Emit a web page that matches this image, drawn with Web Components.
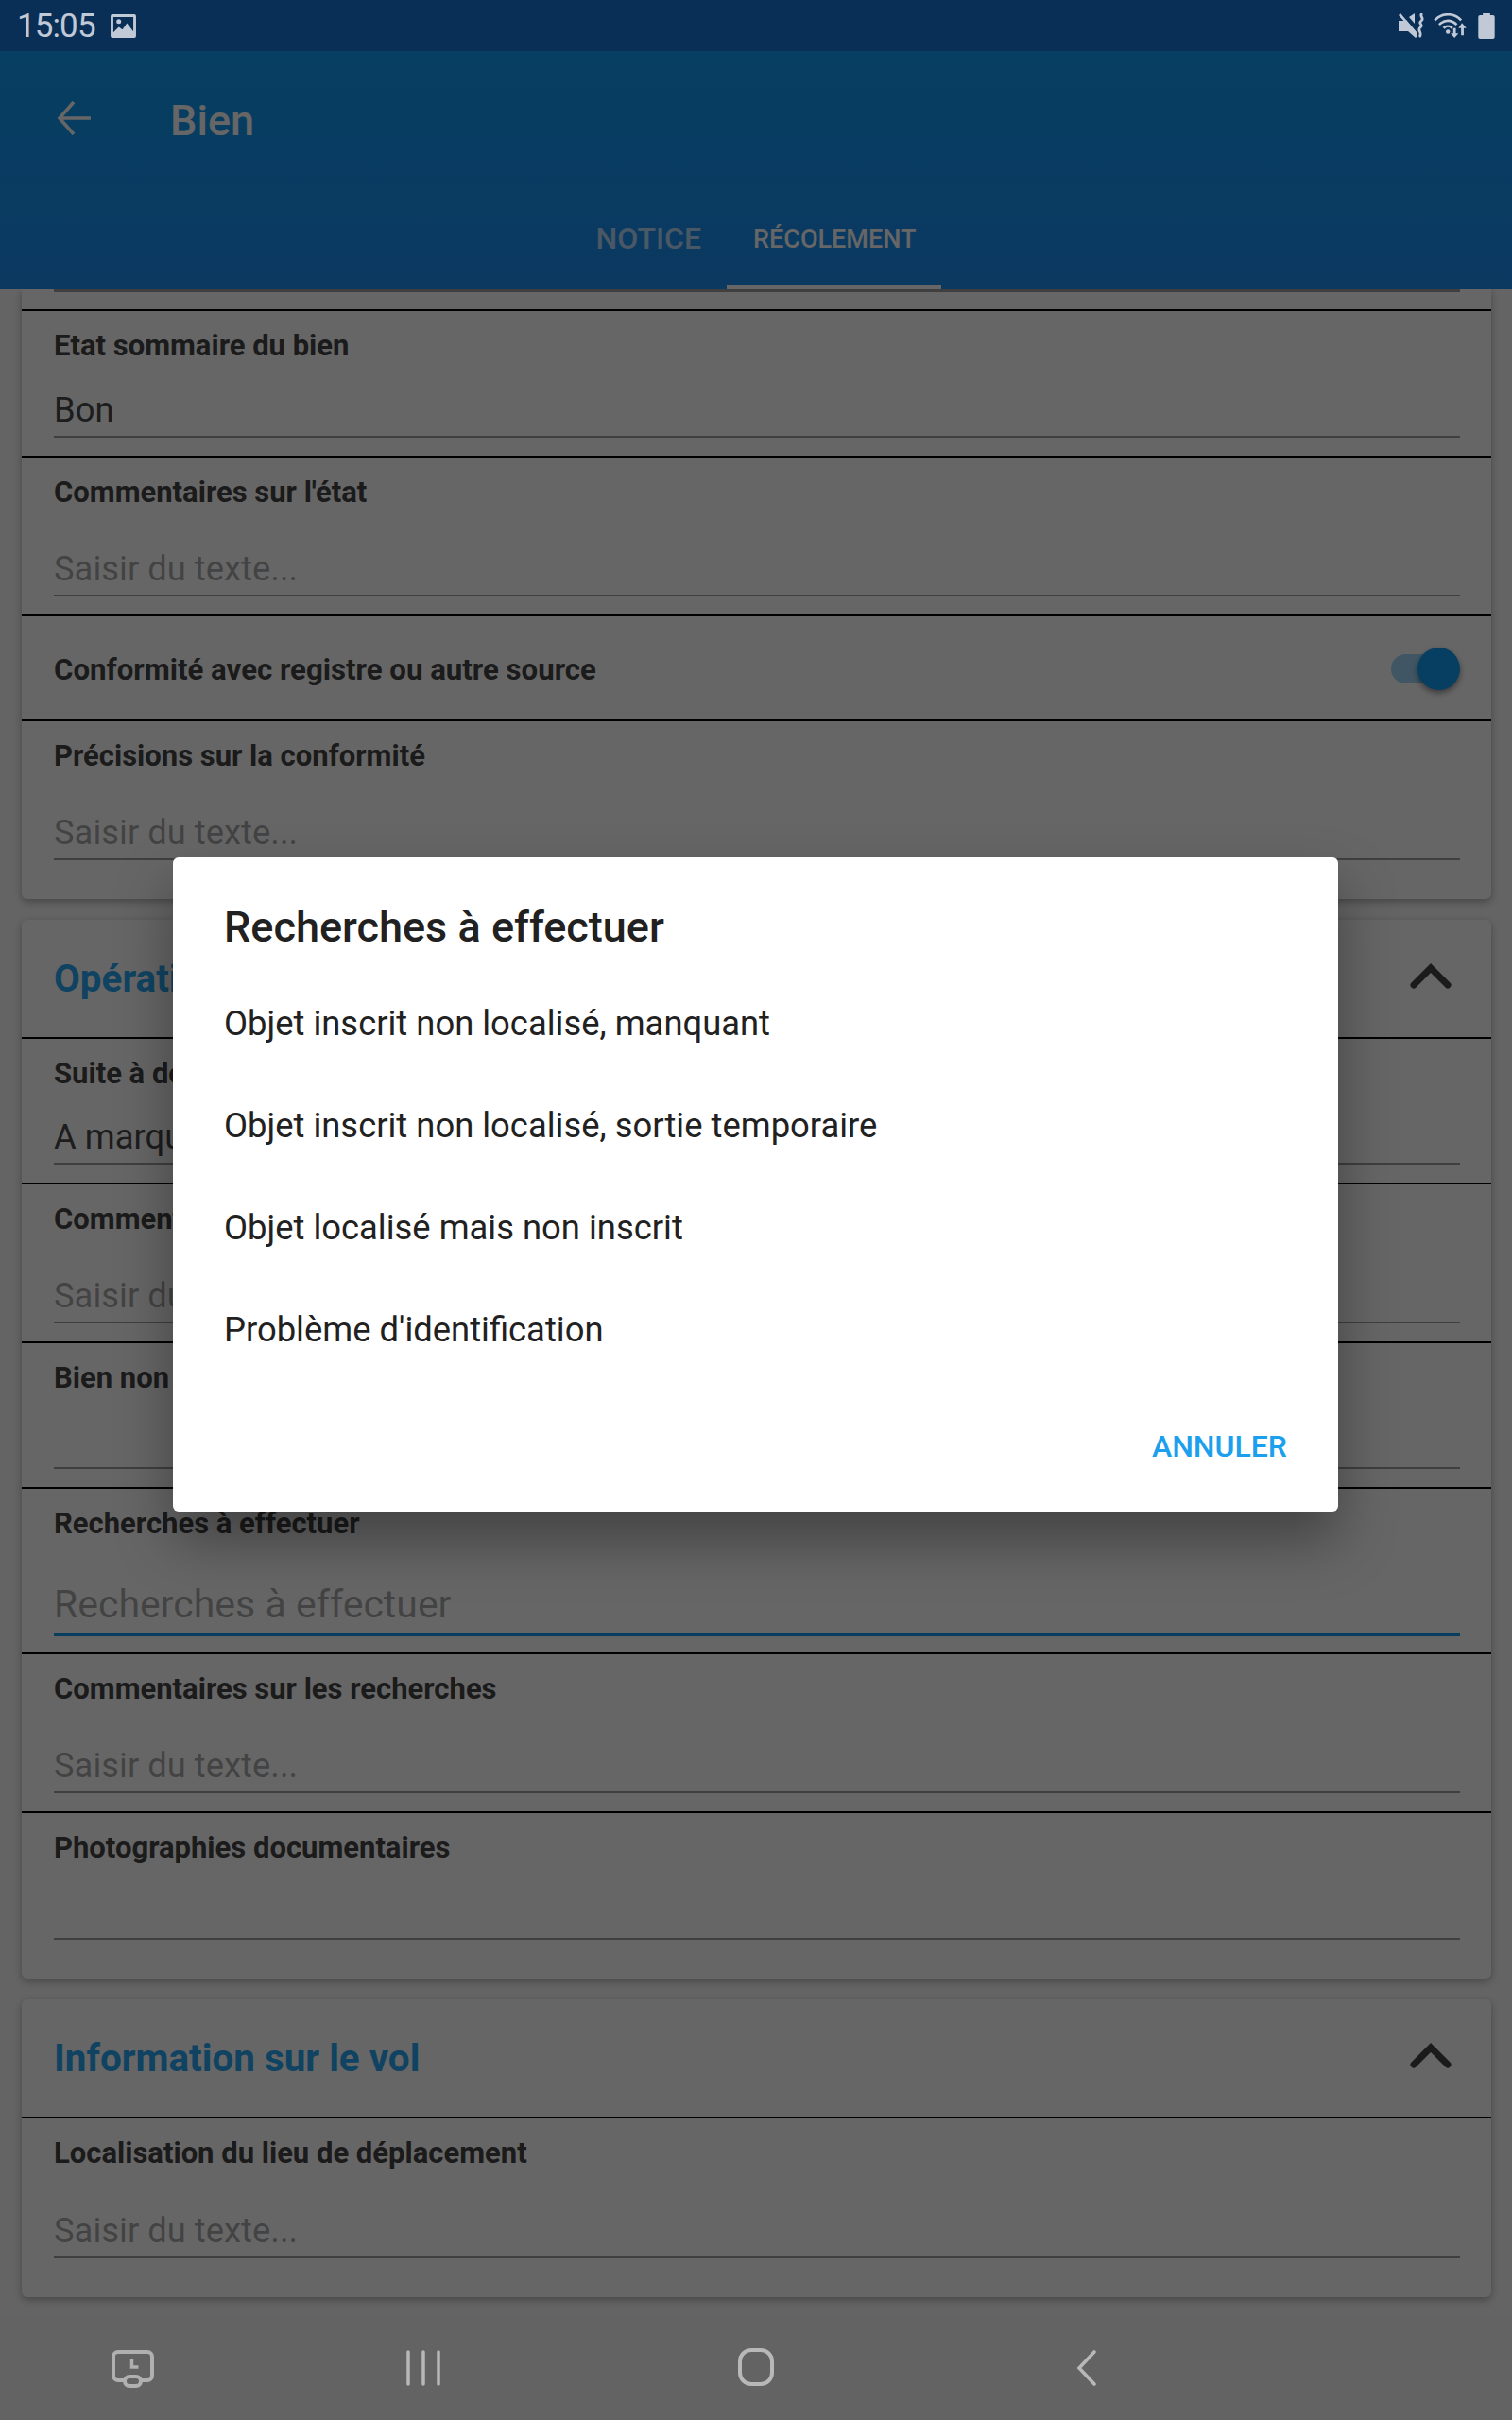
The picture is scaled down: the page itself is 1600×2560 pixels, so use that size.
<!DOCTYPE html>
<html lang="fr">
<head>
<meta charset="utf-8">
<title>Bien</title>
<style>
  html, body { margin: 0; padding: 0; background: #fafafa; }
  body { width: 1600px; height: 2560px; overflow: hidden; font-family: Roboto, "Liberation Sans", sans-serif; }
</style>
</head>
<body>
<app-screen>
  <status-bar slot="status"></status-bar>
  <app-bar slot="bar" title="Bien"></app-bar>

  <form-card slot="content" flat>
    <form-field cut></form-field>
    <form-field label="Etat sommaire du bien" value="Bon" size="155"></form-field>
    <form-field label="Commentaires sur l'état" hint="Saisir du texte..." size="168"></form-field>
    <switch-field label="Conformité avec registre ou autre source"></switch-field>
    <form-field label="Précisions sur la conformité" hint="Saisir du texte..." size="188" last></form-field>
  </form-card>

  <form-card slot="content" heading="Opérations à mener">
    <form-field label="Suite à donner" value="A marquer" size="154"></form-field>
    <form-field label="Commentaires" hint="Saisir du texte..." size="168"></form-field>
    <form-field label="Bien non trouvé" size="154"></form-field>
    <form-field label="Recherches à effectuer" hint="Recherches à effectuer" big focused size="175"></form-field>
    <form-field label="Commentaires sur les recherches" hint="Saisir du texte..." size="168"></form-field>
    <form-field label="Photographies documentaires" size="175" last></form-field>
  </form-card>

  <form-card slot="content" heading="Information sur le vol">
    <form-field label="Localisation du lieu de déplacement" hint="Saisir du texte..." size="189" last></form-field>
  </form-card>

  <choice-dialog slot="dialog" heading="Recherches à effectuer" cancel="ANNULER">
    <li>Objet inscrit non localisé, manquant</li>
    <li>Objet inscrit non localisé, sortie temporaire</li>
    <li>Objet localisé mais non inscrit</li>
    <li>Problème d'identification</li>
  </choice-dialog>

  <nav-bar slot="nav"></nav-bar>
</app-screen>

<script>
class AppScreen extends HTMLElement {
  constructor() {
    super();
    this.attachShadow({mode: 'open'}).innerHTML = `
      <style>
        :host { display: flex; flex-direction: column; width: 1600px; height: 2560px; }
        .main { position: relative; flex: 1; display: flex; flex-direction: column; min-height: 0; overflow: hidden; background: #fafafa; }
        .content { flex: 1; min-height: 0; overflow: hidden; display: flex; flex-direction: column; gap: 22px; padding: 0 22px 0 23px; }
        .scrim { position: absolute; inset: 0; background: rgba(0, 0, 0, .6); display: flex; align-items: center; justify-content: center; }
      </style>
      <slot name="status"></slot>
      <div class="main">
        <slot name="bar"></slot>
        <div class="content"><slot name="content"></slot></div>
        <div class="scrim"><slot name="dialog"></slot></div>
      </div>
      <slot name="nav"></slot>
    `;
  }
}

class StatusBar extends HTMLElement {
  constructor() {
    super();
    this.attachShadow({mode: 'open'}).innerHTML = `
      <style>
        :host { display: flex; align-items: center; height: 54px; background: #0a2f57; color: #c1c9d6; padding: 0 18px 0 18px; box-sizing: border-box; font: 400 35px Roboto, sans-serif; }
        .time { letter-spacing: -.9px; }
        .pic { margin-left: 16px; }
        .right { margin-left: auto; display: flex; align-items: center; }
        svg { display: block; fill: currentColor; }
      </style>
      <span class="time">15:05</span>
      <svg class="pic" width="27" height="25" viewBox="0 0 28 26"><path fill-rule="evenodd" d="M2 0h24a2 2 0 0 1 2 2v22a2 2 0 0 1-2 2H2a2 2 0 0 1-2-2V2a2 2 0 0 1 2-2zM3 3v17l6-6 4 3 5-7 7 9V3z"/><circle cx="9" cy="8" r="2.6"/></svg>
      <div class="right">
        <svg width="28" height="26" viewBox="0 0 28 26"><path d="M0 8h6l2-1 11 13v5l-1 1-8-7H0z"/><path d="M11 4l6-4v11z"/><path d="M2 0l17 20-2 1L0 2z"/><path d="M25 0c-4 3 3 5-1 8s3 4-1 7 3 6-1 10" fill="none" stroke="currentColor" stroke-width="2.800"/></svg>
        <svg style="margin-left:9px" width="36" height="26" viewBox="0 0 38 28"><path d="M1 8C9-1 23-1 31 8" fill="none" stroke="currentColor" stroke-width="2.800"/><path d="M6 13c6-6 14-6 20 0" fill="none" stroke="currentColor" stroke-width="2.800"/><path d="M11 17c3-3 7-3 10 0" fill="none" stroke="currentColor" stroke-width="2.800"/><circle cx="16" cy="21" r="2.400"/><path d="M22 17h3v6h3l-4.500 5-4.500-5h3zM32 11l5 6h-3v8h-3v-8h-3z"/></svg>
        <svg style="margin-left:11px" width="18" height="27" viewBox="0 0 18 28"><path d="M5 0h8v2h3a2 2 0 0 1 2 2v22a2 2 0 0 1-2 2H2a2 2 0 0 1-2-2V4a2 2 0 0 1 2-2h3z"/></svg>
      </div>
    `;
  }
}

class AppBar extends HTMLElement {
  connectedCallback() {
    if (this.shadowRoot) return;
    this.attachShadow({mode: 'open'}).innerHTML = `
      <style>
        :host { display: block; height: 252px; flex: none; box-sizing: border-box; color: #fff; background: linear-gradient(#129df6, #1d8ef1); font-family: Roboto, sans-serif; }
        .top { display: flex; align-items: center; height: 142px; padding-left: 60px; }
        .top svg { display: block; }
        h1 { margin: 4px 0 0 84px; font: 500 45px Roboto, sans-serif; }
        .tabs { display: flex; justify-content: center; height: 110px; align-items: flex-end; }
        .tab { height: 76px; box-sizing: border-box; padding: 0 27px 32px; display: flex; align-items: center; justify-content: center; font: 500 32px Roboto, sans-serif; color: rgba(255,255,255,.7); }
        .tab.on { font-size: 27px; color: #fff; border-bottom: 5px solid #fff; padding-bottom: 25px; padding-left: 28px; padding-right: 27px; }
      </style>
      <div class="top">
        <svg width="36" height="36" viewBox="0 0 36 36"><path d="M36 18H3M18 1L3 18l15 17" fill="none" stroke="#fff" stroke-width="3.600"/></svg>
        <h1>${this.getAttribute('title')}</h1>
      </div>
      <div class="tabs">
        <div class="tab">NOTICE</div>
        <div class="tab on">RÉCOLEMENT</div>
      </div>
    `;
  }
}

class FormCard extends HTMLElement {
  connectedCallback() {
    if (this.shadowRoot) return;
    const heading = this.getAttribute('heading');
    this.attachShadow({mode: 'open'}).innerHTML = `
      <style>
        :host { display: block; flex: none; background: #fff; border-radius: 6px; box-shadow: 0 3px 8px rgba(0,0,0,.3); }
        :host([flat]) { border-radius: 0 0 6px 6px; }
        .head { height: 126px; box-sizing: border-box; display: flex; align-items: center; justify-content: space-between; padding: 0 42px 0 34px; border-bottom: 2px solid #000; }
        h2 { margin: 0; font: 700 40.400px Roboto, sans-serif; color: #2aa8f5; }
        svg { display: block; margin-bottom: 6px; }
      </style>
      ${heading ? `<div class="head"><h2>${heading}</h2><svg width="44" height="28" viewBox="0 0 44 28"><path d="M4 24L22 6l18 18" fill="none" stroke="#444" stroke-width="7" stroke-linecap="round"/></svg></div>` : ''}
      <slot></slot>
    `;
  }
}

class FormField extends HTMLElement {
  connectedCallback() {
    if (this.shadowRoot) return;
    const label = this.getAttribute('label');
    const value = this.getAttribute('value');
    const hint = this.getAttribute('hint');
    const size = this.getAttribute('size') || 154;
    this.attachShadow({mode: 'open'}).innerHTML = `
      <style>
        :host { display: block; box-sizing: border-box; height: ${size}px; padding: 0 33px 0 34px; border-bottom: 2px solid #000; font-family: Roboto, sans-serif; }
        :host([last]) { border-bottom: 0; }
        :host([cut]) { height: 23px; }
        .inner { display: flex; flex-direction: column; height: 100%; box-sizing: border-box; padding-bottom: 19px; }
        :host([last]) .inner { padding-bottom: 41px; }
        .label { font: 700 31px/36px Roboto, sans-serif; color: #444; margin-top: 19px; }
        .val { margin-top: auto; font: 400 36.400px/44px Roboto, sans-serif; color: #4a4a4a; height: 44px; }
        .val.hint { color: rgba(0,0,0,.36); }
        .line { flex: none; height: 2px; margin-top: 5px; background: rgba(0,0,0,.38); }
        :host([big]) .val { font-size: 41px; }
        :host([focused]) .line { height: 4px; background: #149df0; margin-top: 8px; margin-bottom: -2px; }
        :host([cut]) .inner { padding: 0; }
        :host([cut]) .line { margin: 0; height: 3px; }
      </style>
      ${this.hasAttribute('cut') ? '<div class="inner"><div class="line"></div></div>' : `<div class="inner">
        <div class="label">${label}</div>
        <div class="val ${hint ? 'hint' : ''}">${value || hint || ''}</div>
        <div class="line"></div>
      </div>`}
    `;
  }
}

class SwitchField extends HTMLElement {
  connectedCallback() {
    if (this.shadowRoot) return;
    this.attachShadow({mode: 'open'}).innerHTML = `
      <style>
        :host { display: flex; align-items: center; justify-content: space-between; height: 111px; box-sizing: border-box; padding: 0 40px 0 34px; border-bottom: 2px solid #000; font: 700 31.200px Roboto, sans-serif; color: #444; }
        span { padding-top: 4px; }
        .track { position: relative; width: 66px; height: 31px; margin-top: 2px; border-radius: 16px; background: rgba(20,157,240,.4); }
        .thumb { position: absolute; right: -7px; top: -7px; width: 45px; height: 45px; border-radius: 50%; background: #129df6; box-shadow: 0 3px 6px rgba(0,0,0,.45); }
      </style>
      <span>${this.getAttribute('label')}</span>
      <div class="track"><div class="thumb"></div></div>
    `;
  }
}

class ChoiceDialog extends HTMLElement {
  connectedCallback() {
    if (this.shadowRoot) return;
    this.attachShadow({mode: 'open'}).innerHTML = `
      <style>
        :host { display: block; width: 1233px; height: 692px; margin-right: 1px; box-sizing: border-box; background: #fff; border-radius: 6px; padding: 41px 54px 0 54px; color: #212121; box-shadow: 0 30px 60px rgba(0,0,0,.35); font-family: Roboto, sans-serif; }
        h3 { margin: 0 0 15px; font: 500 45px/66px Roboto, sans-serif; color: #212121; }
        ::slotted(li) { display: block; height: 108px; line-height: 108px; font-size: 36.400px; }
        .acts { display: flex; justify-content: flex-end; margin-top: 50px; font: 500 32px Roboto, sans-serif; color: #1c9fec; }
      </style>
      <h3>${this.getAttribute('heading')}</h3>
      <slot></slot>
      <div class="acts"><span>${this.getAttribute('cancel')}</span></div>
    `;
  }
}

class NavBar extends HTMLElement {
  constructor() {
    super();
    this.attachShadow({mode: 'open'}).innerHTML = `
      <style>
        :host { display: flex; height: 108px; flex: none; background: #636363; position: relative; }
        svg { position: absolute; display: block; }
      </style>
      <svg style="left:118px;top:34px" width="45" height="40" viewBox="0 0 45 40"><rect x="2" y="2" width="41" height="30" rx="5" fill="none" stroke="#b0b0b0" stroke-width="4"/><path d="M21.500 9v9h7" fill="none" stroke="#b0b0b0" stroke-width="3.500"/><rect x="14" y="28" width="17" height="10" rx="5" fill="#636363" stroke="#b0b0b0" stroke-width="4"/></svg>
      <svg style="left:428px;top:34px" width="40" height="38" viewBox="0 0 40 38"><path d="M4 2v34M20 2v34M36 2v34" stroke="#b8b8b8" stroke-width="3.500" stroke-linecap="round"/></svg>
      <svg style="left:780px;top:31px" width="40" height="42" viewBox="0 0 40 42"><rect x="3" y="3" width="34" height="36" rx="12" fill="none" stroke="#b8b8b8" stroke-width="4"/></svg>
      <svg style="left:1137px;top:34px" width="26" height="38" viewBox="0 0 26 38"><path d="M21 2L5 19l16 17" fill="none" stroke="#b8b8b8" stroke-width="3.600" stroke-linecap="round"/></svg>
    `;
  }
}

customElements.define('app-screen', AppScreen);
customElements.define('status-bar', StatusBar);
customElements.define('app-bar', AppBar);
customElements.define('form-card', FormCard);
customElements.define('form-field', FormField);
customElements.define('switch-field', SwitchField);
customElements.define('choice-dialog', ChoiceDialog);
customElements.define('nav-bar', NavBar);
</script>
</body>
</html>
